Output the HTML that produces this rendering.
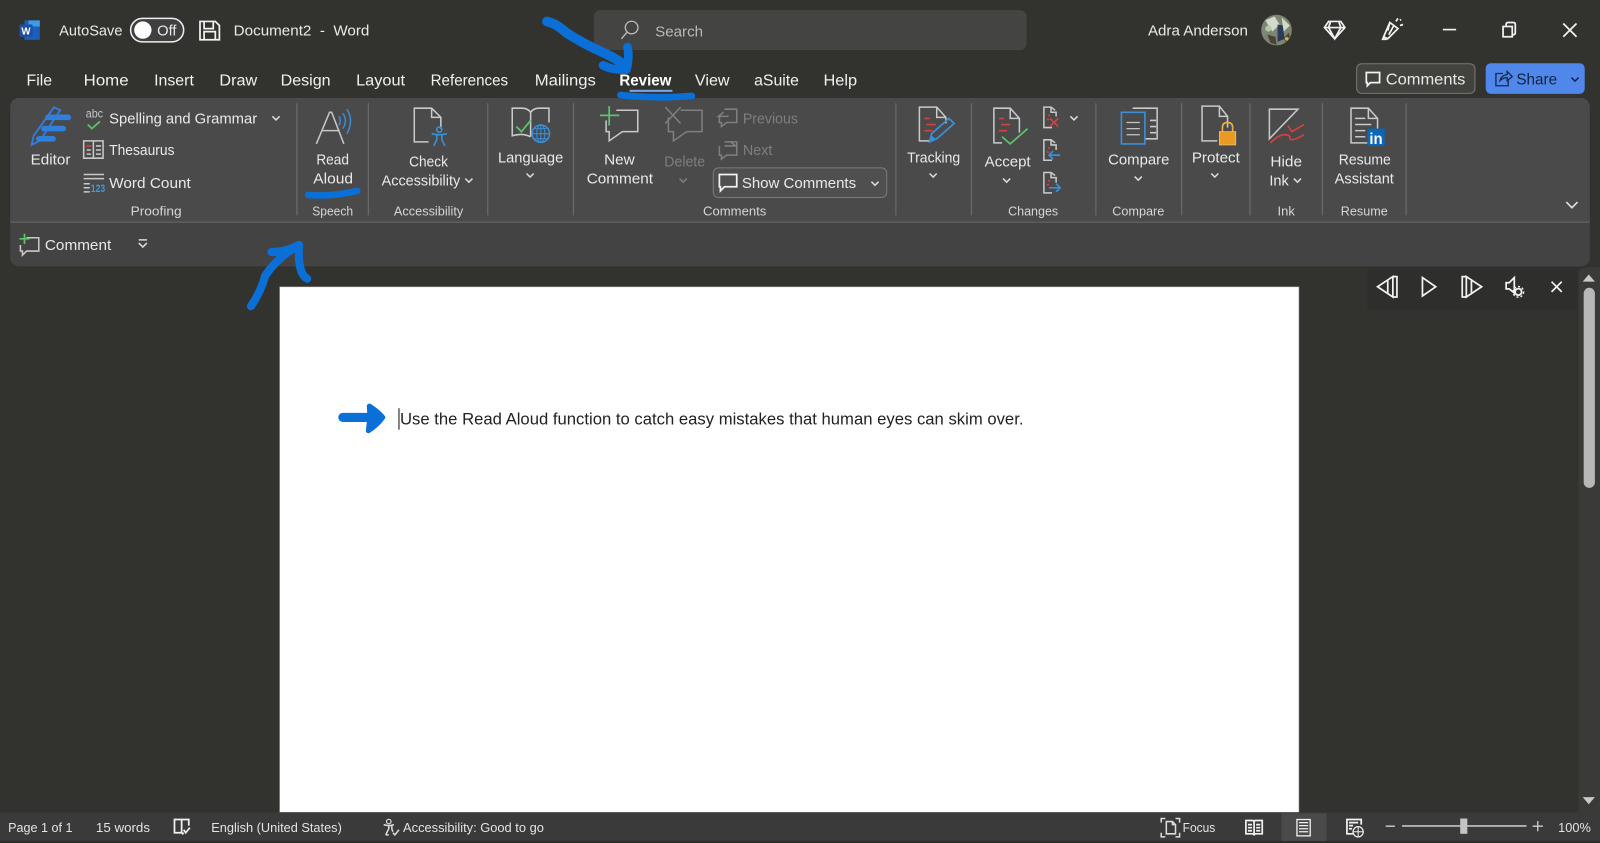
<!DOCTYPE html>
<html lang="en"><head><meta charset="utf-8"><title>Document2 - Word</title>
<style>
html,body{margin:0;padding:0;width:1600px;height:843px;overflow:hidden;background:#32332e}
svg{display:block;position:absolute;left:0;top:0}
text{font-family:"Liberation Sans",Arial,sans-serif;fill:#e9e9e9;font-size:14.5px}
.tab{font-size:15.5px;fill:#f0f0f0}
.lbl{font-size:13px;fill:#d6d6d6}
.dim{fill:#7e7e7e}
.st{font-size:13px;fill:#e4e4e4}
.i{fill:none;stroke:#c9c9c9;stroke-width:1.5}
.d{fill:none;stroke:#7f7f7f;stroke-width:1.5}
.w{fill:none;stroke:#f2f2f2;stroke-width:1.7}
.c{fill:none;stroke:#dcdcdc;stroke-width:1.5}
.b{fill:none;stroke:#3a8fd8;stroke-width:1.6}
.r{fill:none;stroke:#d8403f;stroke-width:1.6}
.g{fill:none;stroke:#5cc46a;stroke-width:1.7}
.ink{fill:none;stroke:#0a6fd6;stroke-linecap:round;stroke-linejoin:round}
</style></head><body>
<svg width="1600" height="843" viewBox="0 0 1568 826" preserveAspectRatio="none" xmlns="http://www.w3.org/2000/svg">
<rect width="1568" height="826" fill="#32332e"/>

<!-- title bar -->
<path d="M24 20h15v19H24z" fill="#1c5fb8"/><path d="M28 20h11v6H28z" fill="#3f9be8"/>
<rect x="19" y="24" width="13" height="12" rx="1" fill="#1d4fa8"/>
<text x="21" y="34" style="font-size:10px;font-weight:bold;fill:#fff" textLength="9" lengthAdjust="spacingAndGlyphs">W</text>
<text x="58" y="35" textLength="62" lengthAdjust="spacingAndGlyphs">AutoSave</text>
<rect x="128" y="18" width="52" height="23" rx="11.5" fill="#3f3f3f" stroke="#f0f0f0" stroke-width="1.5"/>
<circle cx="140" cy="29.5" r="8.5" fill="#fff"/>
<text x="154" y="35" textLength="19" lengthAdjust="spacingAndGlyphs">Off</text>
<path class="w" d="M196 21h15l4 4v14h-19zM200 21v7h9v-7M200 39v-8h11v8"/>
<text x="229" y="35" textLength="133" lengthAdjust="spacingAndGlyphs">Document2&#160;&#160;-&#160;&#160;Word</text>

<rect x="582" y="10" width="424" height="39" rx="6" fill="#444442"/>
<circle cx="619" cy="27" r="6.2" fill="none" stroke="#bdbdbd" stroke-width="1.3"/><path d="M614.5 31.5L609 38" stroke="#bdbdbd" stroke-width="1.3"/>
<text x="642" y="36" style="fill:#b9b9b9" textLength="47" lengthAdjust="spacingAndGlyphs">Search</text>

<text x="1125" y="35" textLength="98" lengthAdjust="spacingAndGlyphs">Adra Anderson</text>
<circle cx="1251" cy="29.5" r="15" fill="#7d8672"/>
<path d="M1240 20l9-4 5 8-7 7zM1256 17l8 8-6 6z" fill="#d4dacb"/><path d="M1252 24l5 1 2 13-7 3z" fill="#2c3a5c"/><path d="M1242 34l8 2 1 8-6-2zM1258 38l5-6 1 4-4 5z" fill="#4a4334"/><circle cx="1243" cy="28" r="3" fill="#b9c6ae"/><circle cx="1261" cy="38" r="1.8" fill="#c9b34c"/>
<path class="w" d="M1302 21h12l4 6-10 11-10-11zM1298 27h20M1304 21l-2 6 6 11 6-11-2-6"/>
<path class="w" d="M1356 36l6-14 8 6-10 10zM1356 36l-1 2.500 4 0M1368 21l2-3M1372 25l3-1M1372 20l1-1M1362 22l-2 8M1366 25l-5 9"/>
<path d="M1414 29h13" stroke="#f2f2f2" stroke-width="1.600"/>
<path class="w" d="M1473 26h9v10h-9zM1476 26v-2q0-2 2-2h5q2 0 2 2v8q0 2-2 2h-1" stroke-width="1.500"/>
<path d="M1532 23l13 13M1545 23l-13 13" stroke="#f2f2f2" stroke-width="1.700"/>

<!-- tabs -->
<text class="tab" x="26" y="84" textLength="25" lengthAdjust="spacingAndGlyphs">File</text>
<text class="tab" x="82" y="84" textLength="44" lengthAdjust="spacingAndGlyphs">Home</text>
<text class="tab" x="151" y="84" textLength="39" lengthAdjust="spacingAndGlyphs">Insert</text>
<text class="tab" x="215" y="84" textLength="37" lengthAdjust="spacingAndGlyphs">Draw</text>
<text class="tab" x="275" y="84" textLength="49" lengthAdjust="spacingAndGlyphs">Design</text>
<text class="tab" x="349" y="84" textLength="48" lengthAdjust="spacingAndGlyphs">Layout</text>
<text class="tab" x="422" y="84" textLength="76" lengthAdjust="spacingAndGlyphs">References</text>
<text class="tab" x="524" y="84" textLength="60" lengthAdjust="spacingAndGlyphs">Mailings</text>
<text class="tab" x="607" y="84" style="font-weight:bold;fill:#fff" textLength="51" lengthAdjust="spacingAndGlyphs">Review</text>
<text class="tab" x="681" y="84" textLength="34" lengthAdjust="spacingAndGlyphs">View</text>
<text class="tab" x="739" y="84" textLength="44" lengthAdjust="spacingAndGlyphs">aSuite</text>
<text class="tab" x="807" y="84" textLength="33" lengthAdjust="spacingAndGlyphs">Help</text>
<rect x="617" y="88" width="42" height="2" fill="#7aa5ee"/>

<!-- comments / share -->
<rect x="1329.5" y="62.5" width="116" height="29" rx="5" fill="#42423f" stroke="#777" stroke-width="1"/>
<path class="w" d="M1339 71h13v10h-9l-3 3v-3h-1z" stroke-width="1.400"/>
<text x="1358" y="83" style="font-size:15.5px" textLength="78" lengthAdjust="spacingAndGlyphs">Comments</text>
<rect x="1456" y="62" width="97" height="30" rx="5" fill="#4f88ea"/>
<path d="M1473 72h-7v12h12v-6M1470 79q1-5 7-6v-3l5 5-5 4v-3q-4 0-7 3z" fill="none" stroke="#14294e" stroke-width="1.300"/>
<text x="1486" y="83" style="font-size:15.5px;fill:#10233f" textLength="40" lengthAdjust="spacingAndGlyphs">Share</text>
<path d="M1540 76l3.500 3.500 3.500-3.500" fill="none" stroke="#10233f" stroke-width="1.400"/>

<!-- ribbon -->
<path d="M20 96H1548q10 0 10 10V251q0 10-10 10H20q-10 0-10-10V106q0-10 10-10z" fill="#434343"/>
<path d="M20 96H1548q10 0 10 10V218H10V106q0-10 10-10z" fill="#4a4a4a"/>
<rect x="10" y="217" width="1548" height="1.500" fill="#5c5c5c"/>
<g stroke="#6a6a6a" stroke-width="1.200">
<path d="M291 101v110M361 101v110M478 101v110M562 101v110M878 101v110M952 101v110M1074 101v110M1158 101v110M1225 101v110M1296 101v110M1378 101v110"/>
</g>

<!-- Editor -->
<path d="M53 105l6 3-20 30-8 4 2-9z" fill="none" stroke="#2f7fdb" stroke-width="1.800"/>
<path d="M47 115h20M43 126h19M38 136h14" stroke="#2f7fdb" stroke-width="5.500" stroke-linecap="round"/>
<text x="30" y="161" textLength="39" lengthAdjust="spacingAndGlyphs">Editor</text>
<text x="84" y="115" style="font-size:12px;fill:#c6c6c6" textLength="17" lengthAdjust="spacingAndGlyphs">abc</text>
<path class="g" d="M86 122l4 4 8-7"/>
<text x="107" y="121" textLength="145" lengthAdjust="spacingAndGlyphs">Spelling and Grammar</text>
<path class="c" d="M267 114l3.500 3.500 3.500-3.500"/>
<path class="i" d="M82 138h19v17H82zM91.500 138v17M85 147h4M94 143h5M94 147h5M94 151h5M85 151h4"/><path d="M84.500 143h5" class="r"/>
<text x="107" y="152" textLength="64" lengthAdjust="spacingAndGlyphs">Thesaurus</text>
<path class="i" d="M82 171h20M82 175h20M82 180h6M82 184h6M82 188h6" stroke-width="1.200"/>
<text x="89" y="188" style="font-size:10.500px;font-weight:bold;fill:#3a9be0" textLength="14" lengthAdjust="spacingAndGlyphs">123</text>
<text x="107" y="184" textLength="80" lengthAdjust="spacingAndGlyphs">Word Count</text>
<text class="lbl" x="128" y="211" textLength="50" lengthAdjust="spacingAndGlyphs">Proofing</text>

<!-- Read aloud -->
<path d="M310 141l13-31h2l12 31M315 128h18" fill="none" stroke="#c6c6c6" stroke-width="1.500"/>
<path d="M332 114q3 4 0 9M336 111q5 7 0 15M340 107q7 11 0 24" fill="none" stroke="#3a8fd8" stroke-width="1.400"/>
<text x="310" y="161" textLength="32" lengthAdjust="spacingAndGlyphs">Read</text>
<text x="307" y="180" textLength="39" lengthAdjust="spacingAndGlyphs">Aloud</text>
<text class="lbl" x="306" y="211" textLength="40" lengthAdjust="spacingAndGlyphs">Speech</text>

<!-- Accessibility -->
<path class="i" d="M420 139h-14v-33h17l9 9v11M423 106v9h9"/>
<g fill="none" stroke="#3a8fd8" stroke-width="1.600"><circle cx="430.500" cy="127" r="2.500"/><path d="M423 131l5 1h5l5-1M428 132v5l-3 6M433 132v5l3 6"/></g>
<text x="401" y="163" textLength="38" lengthAdjust="spacingAndGlyphs">Check</text>
<text x="374" y="182" textLength="77" lengthAdjust="spacingAndGlyphs">Accessibility</text>
<path class="c" d="M456 175l3.500 3.500 3.500-3.500"/>
<text class="lbl" x="386" y="211" textLength="68" lengthAdjust="spacingAndGlyphs">Accessibility</text>

<!-- Language -->
<path class="i" d="M520 134q-8-4-18-1v-27h10q5 0 8 4 3-4 8-4h10v14"/><path class="i" d="M520 110v24"/>
<path class="g" d="M506 124l5 5 9-11"/>
<circle cx="530" cy="131" r="8.500" fill="#4a4a4a" stroke="#3a8fd8" stroke-width="1.500"/>
<path d="M521.500 131h17M530 122.500v17M524 126h12M524 136h12" stroke="#3a8fd8" stroke-width="1"/><ellipse cx="530" cy="131" rx="4" ry="8.500" fill="none" stroke="#3a8fd8"/>
<text x="488" y="159" textLength="64" lengthAdjust="spacingAndGlyphs">Language</text>
<path class="c" d="M516 170l3.500 3.500 3.500-3.500"/>

<!-- Comments group -->
<path class="i" d="M604 108h21v21h-15l-13 9v-9h-3v-11"/><path class="g" d="M597 104v19M588 113h19"/>
<text x="592" y="161" textLength="30" lengthAdjust="spacingAndGlyphs">New</text>
<text x="575" y="180" textLength="65" lengthAdjust="spacingAndGlyphs">Comment</text>
<path class="d" d="M667 108h21v21h-15l-13 9v-9h-5v-14M652 105l15 16M667 105l-15 16"/>
<text class="dim" x="651" y="163" textLength="40" lengthAdjust="spacingAndGlyphs">Delete</text>
<path class="d" d="M666 175l3.500 3.500 3.500-3.500"/>
<path class="d" d="M710 107h12v13h-10l-5 4v-4h-2v-6M709 110l-5 4h10" stroke-width="1.300"/>
<text class="dim" x="728" y="121" textLength="54" lengthAdjust="spacingAndGlyphs">Previous</text>
<path class="d" d="M710 139h12v13h-10l-5 4v-4h-2v-9M716 139l5 4h-11" stroke-width="1.300"/>
<text class="dim" x="728" y="152" textLength="29" lengthAdjust="spacingAndGlyphs">Next</text>
<rect x="699" y="164.500" width="170" height="29" rx="5" fill="#4f4f4f" stroke="#7a7a7a"/>
<path class="w" d="M705 171h17v12h-12l-4 4v-4h-1z" stroke-width="1.400"/>
<text x="727" y="184" textLength="112" lengthAdjust="spacingAndGlyphs">Show Comments</text>
<path class="c" d="M854 178l3.500 3.500 3.500-3.500"/>
<text class="lbl" x="689" y="211" textLength="62" lengthAdjust="spacingAndGlyphs">Comments</text>

<!-- Tracking -->
<path class="i" d="M912 138h-11v-33h17l9 10v6M918 105v10h9"/>
<path class="r" d="M906 116h5M908 122h9M906 128h8"/>
<path d="M911 139l2-8 17-15 5 5-17 15z" fill="none" stroke="#3a8fd8" stroke-width="1.700"/><path d="M911 139l2-6 4 3z" fill="#3a8fd8"/>
<text x="889" y="159" textLength="52" lengthAdjust="spacingAndGlyphs">Tracking</text>
<path class="c" d="M911 170l3.500 3.500 3.500-3.500"/>

<!-- Changes -->
<path class="i" d="M982 140h-8v-34h16l9 10v14M990 106v10h9"/>
<path class="r" d="M979 116h5M981 122h9M979 128h8"/>
<path class="g" d="M982 134l8 7 17-15"/>
<text x="965" y="163" textLength="45" lengthAdjust="spacingAndGlyphs">Accept</text>
<path class="c" d="M983 175l3.500 3.500 3.500-3.500"/>
<path class="i" d="M1034 108l-4-3h-7v20h8M1030 105v5h5v4"/><path class="r" d="M1027 113h2M1026 117h2M1029 116l8 8M1037 116l-8 8"/>
<path class="c" d="M1049 114l3.500 3.500 3.500-3.500"/>
<path class="i" d="M1034 140l-4-3h-7v20h8M1030 137v5h5v5"/><path class="r" d="M1027 145h2M1026 149h2"/><path class="b" d="M1039 152h-11M1032 148l-4 4 4 4"/>
<path class="i" d="M1034 172l-4-3h-7v20h8M1030 169v5h5v5"/><path class="r" d="M1027 177h2M1026 181h2"/><path class="b" d="M1028 184h11M1035 180l4 4-4 4"/>
<text class="lbl" x="988" y="211" textLength="49" lengthAdjust="spacingAndGlyphs">Changes</text>

<!-- Compare -->
<path class="i" d="M1110 106h24v30h-12M1127 118h6M1127 124h6M1127 130h6"/>
<path class="b" d="M1099 110h23v31h-23z"/>
<path d="M1104 120h13M1104 126h13M1104 132h13" stroke="#c6c6c6" stroke-width="1.200"/>
<text x="1086" y="161" textLength="60" lengthAdjust="spacingAndGlyphs">Compare</text>
<path class="c" d="M1112 173l3.500 3.500 3.500-3.500"/>
<text class="lbl" x="1090" y="211" textLength="51" lengthAdjust="spacingAndGlyphs">Compare</text>

<!-- Protect -->
<path class="i" d="M1193 138h-15v-34h17l8 10v11M1195 104v10h8"/>
<rect x="1195" y="129" width="16" height="13" fill="#e89a22" stroke="#f0c070" stroke-width=".8"/>
<path d="M1198 129v-4q0-5 5-5t5 5v4" fill="none" stroke="#e8b048" stroke-width="1.600"/>
<text x="1168" y="159" textLength="47" lengthAdjust="spacingAndGlyphs">Protect</text>
<path class="c" d="M1187 170l3.500 3.500 3.500-3.500"/>

<!-- Ink -->
<path class="i" d="M1272 107h-28v29zM1272 107l-28 29"/>
<path d="M1262 123l4 6 12-7M1245 140q8-8 14-8t5 4q2 3 14-4" fill="none" stroke="#d8403f" stroke-width="1.600"/>
<text x="1245" y="163" textLength="31" lengthAdjust="spacingAndGlyphs">Hide</text>
<text x="1244" y="182" textLength="19" lengthAdjust="spacingAndGlyphs">Ink</text>
<path class="c" d="M1268 175l3.500 3.500 3.500-3.500"/>
<text class="lbl" x="1252" y="211" textLength="17" lengthAdjust="spacingAndGlyphs">Ink</text>

<!-- Resume -->
<path class="i" d="M1340 140h-16v-34h17l9 10v10M1341 106v10h9M1328 116h10M1328 122h16M1328 128h10M1328 134h10"/>
<rect x="1340" y="126" width="17" height="17" fill="#0a66b8"/>
<text x="1342" y="141" style="font-size:15px;font-weight:bold;fill:#fff" textLength="13" lengthAdjust="spacingAndGlyphs">in</text>
<text x="1312" y="161" textLength="51" lengthAdjust="spacingAndGlyphs">Resume</text>
<text x="1308" y="180" textLength="58" lengthAdjust="spacingAndGlyphs">Assistant</text>
<text class="lbl" x="1314" y="211" textLength="46" lengthAdjust="spacingAndGlyphs">Resume</text>
<path d="M1535 198l5.500 5.500 5.500-5.500" fill="none" stroke="#e0e0e0" stroke-width="1.600"/>

<!-- QAT -->
<path class="i" d="M26 233h12v13H26l-4 4v-4h-2v-6"/><path class="g" d="M24 229v10M19 234h10" stroke-width="1.500"/>
<text x="44" y="245" textLength="65" lengthAdjust="spacingAndGlyphs">Comment</text>
<path class="c" d="M136 235h8M136 238l4 4 4-4" stroke-width="1.400"/>

<!-- document -->
<rect x="274" y="281" width="999" height="515" fill="#fff" stroke="#8a8a8a" stroke-width=".6"/>
<rect x="390.500" y="400" width="1" height="21" fill="#111"/>
<text x="392" y="416" style="font-size:16px;fill:#222" textLength="611" lengthAdjust="spacingAndGlyphs">Use the Read Aloud function to catch easy mistakes that human eyes can skim over.</text>

<!-- read aloud bar -->
<rect x="1340" y="262" width="206" height="41" fill="#2e2f2c"/>
<path class="w" d="M1350 281l15-10v20zM1365 271h4v20h-4M1360 275v12"/>
<path class="w" d="M1394 272l13 9-13 9z"/>
<path class="w" d="M1437 271l15 10-15 10zM1437 271h-4v20h4M1442 275v12"/>
<path class="w" d="M1476 277h3l5-5v15l-5-4h-3z" stroke-width="1.500"/>
<circle cx="1488" cy="286" r="3.200" fill="none" stroke="#f2f2f2" stroke-width="1.800"/>
<circle cx="1488" cy="286" r="5.200" fill="none" stroke="#f2f2f2" stroke-width="1.400" stroke-dasharray="2 2"/>
<path d="M1520.500 276l10 10M1530.500 276l-10 10" stroke="#f2f2f2" stroke-width="1.700"/>

<!-- scrollbar -->
<path d="M1547 796V272q0-10 10-10h11v534z" fill="#3a3b38"/>
<path d="M1551 276l6-7 6 7z" fill="#c9c9c9"/>
<rect x="1552" y="282" width="11" height="196" rx="5.500" fill="#b8b8b8"/>
<path d="M1551 781l6 7 6-7z" fill="#c9c9c9"/>

<!-- status bar -->
<rect y="796" width="1568" height="28" fill="#3a3a3a"/>
<rect y="824" width="1568" height="2" fill="#2d2f24"/>
<text class="st" x="8" y="815" textLength="63" lengthAdjust="spacingAndGlyphs">Page 1 of 1</text>
<text class="st" x="94" y="815" textLength="53" lengthAdjust="spacingAndGlyphs">15 words</text>
<path class="w" d="M178 816v-13h-7v13h7l1 1 1-1M178 803h7v6M178 803v13M180 813l2 3 4-5" stroke-width="1.300"/>
<text class="st" x="207" y="815" textLength="128" lengthAdjust="spacingAndGlyphs">English (United States)</text>
<path class="c" d="M376 808q3 1 5 1t5-1M381 809v3l-3 6M378 818h3M384 809v3l1 3" stroke-width="1.300"/><circle cx="381" cy="805" r="2.200" fill="none" stroke="#dcdcdc" stroke-width="1.200"/><path class="c" d="M385 816l2 2 4-5" stroke-width="1.300"/>
<text class="st" x="395" y="815" textLength="138" lengthAdjust="spacingAndGlyphs">Accessibility: Good to go</text>
<path class="c" d="M1138 806v-4h4M1152 802h4v4M1138 816v4h4M1152 820h4v-4M1143 805h6l3 3v9h-9zM1149 805v3h3" stroke-width="1.300"/>
<text class="st" x="1159" y="815" textLength="32" lengthAdjust="spacingAndGlyphs">Focus</text>
<path class="w" d="M1221 804h7l1 1 1-1h7v13h-7l-1 1-1-1h-7zM1229 805v12M1223 808h4M1223 811h4M1223 814h4M1231 808h4M1231 811h4M1231 814h4" stroke-width="1.200"/>
<rect x="1256" y="797" width="44" height="27" fill="#4a4a4a"/>
<rect x="1271" y="803" width="13" height="16" fill="none" stroke="#f0f0f0" stroke-width="1.300"/>
<path d="M1273 806h9M1273 809h9M1273 812h9M1273 815h9" stroke="#f0f0f0" stroke-width="1.200"/>
<path class="w" d="M1327 817h-7v-14h14v5M1322 806h9M1322 809h4M1322 812h3" stroke-width="1.200"/>
<circle cx="1331" cy="815" r="5" fill="#3a3a3a" stroke="#f0f0f0" stroke-width="1.200"/><path d="M1326 815h10M1331 810v10" stroke="#f0f0f0"/>
<path d="M1358 809.500h9M1502 809.500h10M1507 804.500v10" stroke="#d0d0d0" stroke-width="1.300"/>
<rect x="1374" y="808.500" width="122" height="1.600" fill="#c4c4c4"/>
<rect x="1431" y="802" width="7" height="15" fill="#c4c4c4"/>
<text class="st" x="1527" y="815" textLength="32" lengthAdjust="spacingAndGlyphs">100%</text>

<!-- hand-drawn annotations -->
<g class="ink">
<path stroke-width="9.500" d="M536 21Q545 23 555 32Q572 43 590 51Q606 58 614 66"/>
<path stroke-width="8.500" d="M615 46Q617 56 614 68Q600 69 591 64"/>
<path stroke-width="6.500" d="M608 93Q640 97 678 94"/>
<path stroke-width="6.500" d="M302 191Q325 193 350 187"/>
<path stroke-width="8" d="M246 300Q256 285 260 270Q272 252 293 240"/>
<path stroke-width="8" d="M266 247Q280 247 293 240Q292 255 295 265Q297 271 301 273"/>
<path stroke-width="9" d="M336 409H366"/>
<path d="M362 398Q370 403 375 409Q370 416 361 422Q363 410 362 398Z" fill="#0a6fd6" stroke-width="5"/>
</g>
</svg>
</body></html>
